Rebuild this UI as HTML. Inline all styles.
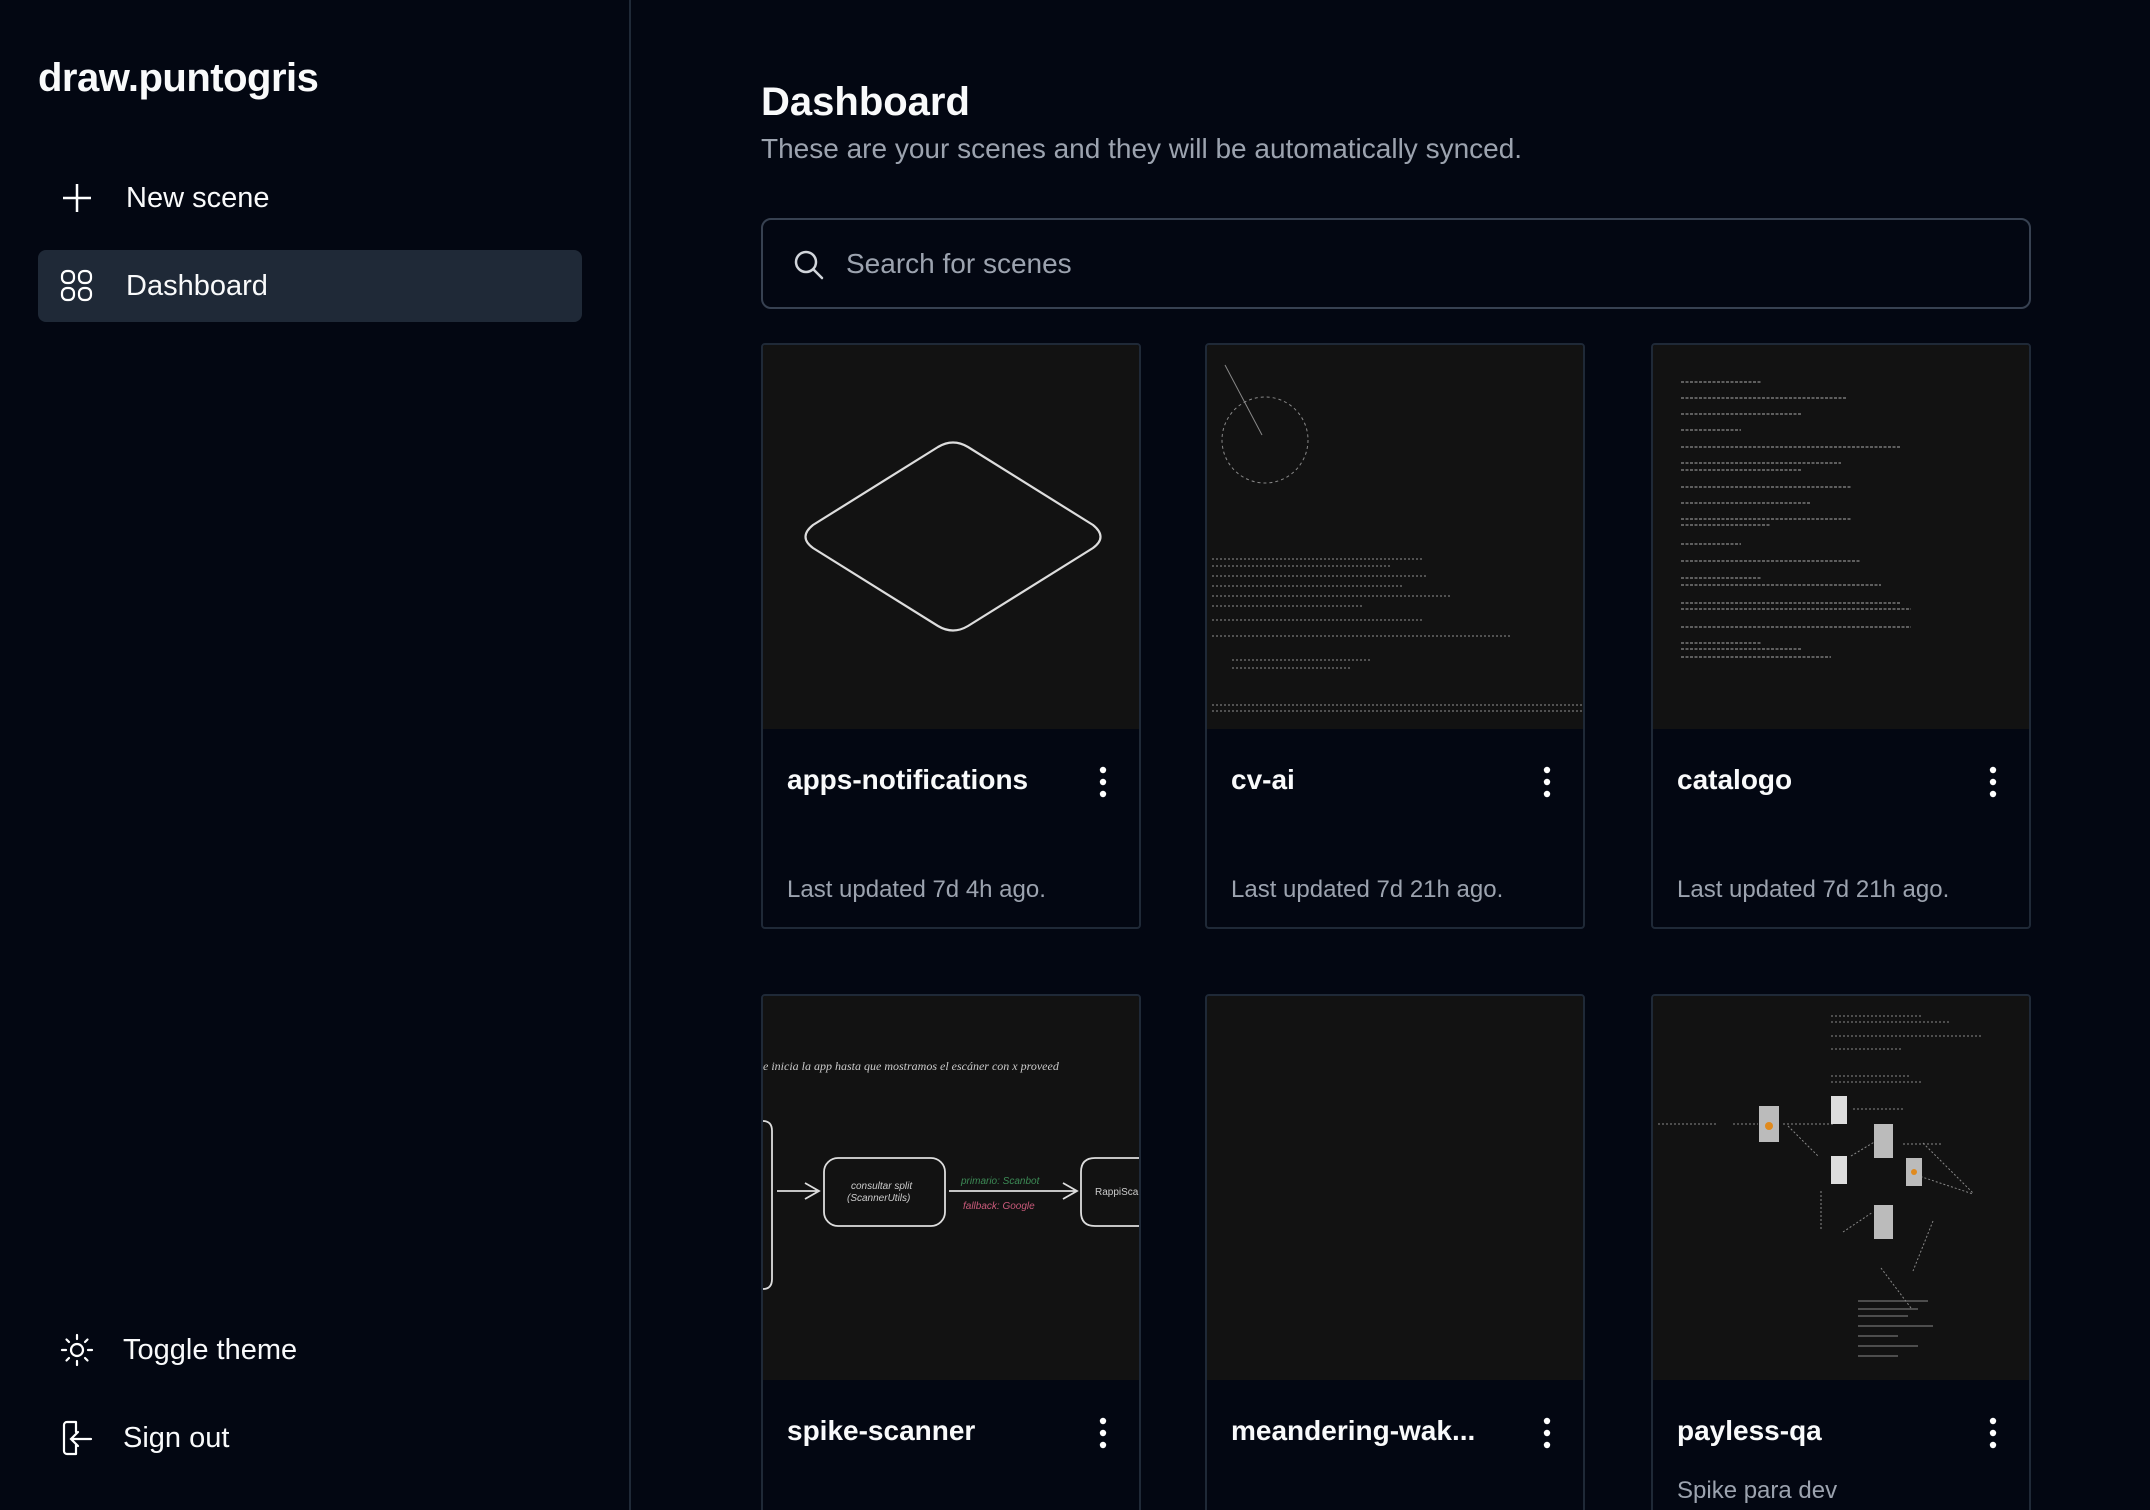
<!DOCTYPE html>
<html style="height:1510px;overflow:hidden"><head><meta charset="utf-8"><style>
*{box-sizing:border-box;margin:0;padding:0}
body{width:2150px;height:1510px;overflow:hidden;background:#030712;font-family:"Liberation Sans",sans-serif;color:#f9fafb;position:relative}
.side{position:absolute;left:0;top:0;width:631px;height:1510px;border-right:2px solid #1f2937}
.logo{position:absolute;left:38px;top:56px;font-size:40px;font-weight:bold;letter-spacing:-0.5px}
.nav{position:absolute;left:38px;width:544px;height:72px;border-radius:8px;display:flex;align-items:center;font-size:29px}
.nav svg{position:absolute;left:22px}
.nav span{position:absolute;left:88px}
.h1{position:absolute;left:761px;top:80px;font-size:40px;font-weight:bold}
.sub{position:absolute;left:761px;top:133px;font-size:28px;color:#9ca3af}
.search{position:absolute;left:761px;top:218px;width:1270px;height:91px;border:2px solid #374151;border-radius:10px}
.search span{position:absolute;left:83px;top:28px;font-size:28px;color:#9ca3af}
.card{position:absolute;width:380px;height:586px;border:2px solid #1f2937;border-radius:4px;overflow:hidden}
.thumb{position:absolute;left:0;top:0;width:100%;height:384px;background:#121212}
.t{position:absolute;left:24px;top:419px;font-size:28px;font-weight:bold}
.d{position:absolute;left:24px;top:531px;font-size:24px;color:#9ca3af}
.k{position:absolute;left:335px;top:420px}
</style></head><body>
<div class="side">
<div class="logo">draw.puntogris</div>
<div class="nav" style="top:162px"><svg width="34" height="34" viewBox="0 0 34 34"><path d="M17 3v28M3 17h28" stroke="#fff" stroke-width="2.5"/></svg><span>New scene</span></div>
<div class="nav" style="top:250px;background:#1f2937"><svg width="34" height="34" viewBox="0 0 34 34" fill="none" stroke="#fff" stroke-width="2.2"><rect x="2" y="2" width="12" height="12" rx="5"/><rect x="19" y="2" width="12" height="12" rx="5"/><rect x="2" y="19" width="12" height="12" rx="5"/><rect x="19" y="19" width="12" height="12" rx="5"/></svg><span>Dashboard</span></div>
<div class="nav" style="top:1314px"><svg width="34" height="34" viewBox="0 0 34 34" fill="none" stroke="#fff" stroke-width="2.2" stroke-linecap="round"><circle cx="17" cy="17" r="6"/><path d="M17 2v4M17 28v4M2 17h4M28 17h4M6.5 6.5l2.5 2.5M25 25l2.5 2.5M6.5 27.5l2.5-2.5M25 9l2.5-2.5"/></svg><span style="left:85px">Toggle theme</span></div>
<div class="nav" style="top:1402px"><svg width="34" height="38" viewBox="0 0 34 38" fill="none" stroke="#fff" stroke-width="2.2" stroke-linecap="round"><path d="M16 3H7a3 3 0 0 0-3 3v26a3 3 0 0 0 3 3h9M16 3v10M16 35V25M31 20H12M18 13l-7 7 7 7"/></svg><span style="left:85px">Sign out</span></div>
</div>
<div class="h1">Dashboard</div>
<div class="sub">These are your scenes and they will be automatically synced.</div>
<div class="search"><svg style="position:absolute;left:30px;top:29px" width="32" height="32" viewBox="0 0 32 32" fill="none" stroke="#d1d5db" stroke-width="2.5" stroke-linecap="round"><circle cx="13" cy="13" r="10"/><path d="M21 21l8 8"/></svg><span>Search for scenes</span></div>

<div class="card" style="left:761px;top:343px"><div class="thumb"><svg width="380" height="384"><path d="M175 102 Q190 93 205 102 L330 180 Q345 192 330 203 L205 281 Q190 290 175 281 L50 203 Q35 192 50 180 Z" fill="none" stroke="#ddd" stroke-width="2.2"/></svg></div><div class="t">apps-notifications</div><div class="k"><svg width="10" height="34"><circle cx="5" cy="5" r="3.2" fill="#fff"/><circle cx="5" cy="17" r="3.2" fill="#fff"/><circle cx="5" cy="29" r="3.2" fill="#fff"/></svg></div><div class="d">Last updated 7d 4h ago.</div></div>

<div class="card" style="left:1205px;top:343px"><div class="thumb"><svg width="380" height="384" stroke="#888" fill="none"><circle cx="58" cy="95" r="43" stroke-dasharray="3 3"/><path d="M18 20 L55 90"/><g stroke="#666" stroke-width="1.5" stroke-dasharray="2 2"><path d="M5 214h210M5 221h180M5 231h215M5 241h190M5 251h240M5 261h150M5 275h210M5 291h300M25 315h140M25 323h120M5 360h370M5 366h370"/></g></svg></div><div class="t">cv-ai</div><div class="k"><svg width="10" height="34"><circle cx="5" cy="5" r="3.2" fill="#fff"/><circle cx="5" cy="17" r="3.2" fill="#fff"/><circle cx="5" cy="29" r="3.2" fill="#fff"/></svg></div><div class="d">Last updated 7d 21h ago.</div></div>

<div class="card" style="left:1651px;top:343px"><div class="thumb"><svg width="380" height="384" stroke="#777" stroke-width="1.5" stroke-dasharray="3 1.5"><path d="M28 37h80M28 53h165M28 69h120M28 85h60M28 102h220M28 118h160M28 125h120M28 142h170M28 158h130M28 174h170M28 180h90M28 199h60M28 216h180M28 233h80M28 240h200M28 258h220M28 264h230M28 282h230M28 298h80M28 304h120M28 312h150"/></svg></div><div class="t">catalogo</div><div class="k"><svg width="10" height="34"><circle cx="5" cy="5" r="3.2" fill="#fff"/><circle cx="5" cy="17" r="3.2" fill="#fff"/><circle cx="5" cy="29" r="3.2" fill="#fff"/></svg></div><div class="d">Last updated 7d 21h ago.</div></div>

<div class="card" style="left:761px;top:994px"><div class="thumb"><svg width="380" height="384" fill="none" stroke="#ddd" stroke-width="1.8"><text x="0" y="74" fill="#ccc" stroke="none" font-family="Liberation Serif,serif" font-style="italic" font-size="12">e inicia la app hasta que mostramos el escáner con x proveed</text><path d="M0 125 Q9 125 9 135 V283 Q9 293 0 293"/><path d="M14 195h40M42 187l14 8-14 8"/><rect x="61" y="162" width="121" height="68" rx="14"/><text x="88" y="193" fill="#ccc" stroke="none" font-size="10" font-style="italic">consultar split</text><text x="84" y="205" fill="#ccc" stroke="none" font-size="10" font-style="italic">(ScannerUtils)</text><path d="M186 195h128M300 187l14 8-14 8"/><text x="198" y="188" fill="#3c8a55" stroke="none" font-size="10" font-style="italic">primario: Scanbot</text><text x="200" y="213" fill="#c95a7a" stroke="none" font-size="10" font-style="italic">fallback: Google</text><path d="M380 162h-48q-14 0-14 14v40q0 14 14 14h48"/><text x="332" y="199" fill="#ccc" stroke="none" font-size="10">RappiScan</text></svg></div><div class="t">spike-scanner</div><div class="k"><svg width="10" height="34"><circle cx="5" cy="5" r="3.2" fill="#fff"/><circle cx="5" cy="17" r="3.2" fill="#fff"/><circle cx="5" cy="29" r="3.2" fill="#fff"/></svg></div></div>

<div class="card" style="left:1205px;top:994px"><div class="thumb"></div><div class="t">meandering-wak...</div><div class="k"><svg width="10" height="34"><circle cx="5" cy="5" r="3.2" fill="#fff"/><circle cx="5" cy="17" r="3.2" fill="#fff"/><circle cx="5" cy="29" r="3.2" fill="#fff"/></svg></div></div>

<div class="card" style="left:1651px;top:994px"><div class="thumb"><svg width="380" height="384" stroke="#888" stroke-width="1" fill="none"><path d="M178 20h90M178 26h120M178 40h150M178 53h70M178 80h80M178 86h90M130 128h50M200 113h50M5 128h60M80 128h25M135 130l30 30M198 160l25-15M168 195v40M250 148h40M260 178l60 20M190 236l30-20M228 272l30 40M280 225l-20 50M270 147l50 50" stroke-dasharray="2 2"/><path d="M205 305h70M205 313h60M205 320h50M205 330h75M205 340h40M205 350h60M205 360h40"/></svg><svg style="position:absolute;left:0;top:0" width="380" height="384"><rect x="106" y="110" width="20" height="36" fill="#bbb"/><circle cx="116" cy="130" r="4" fill="#e08a1e"/><rect x="178" y="100" width="16" height="28" fill="#ddd"/><rect x="221" y="128" width="19" height="34" fill="#bbb"/><rect x="178" y="160" width="16" height="28" fill="#ddd"/><rect x="253" y="162" width="16" height="28" fill="#bbb"/><circle cx="261" cy="176" r="3" fill="#e08a1e"/><rect x="221" y="209" width="19" height="34" fill="#bbb"/></svg></div><div class="t">payless-qa</div><div class="k"><svg width="10" height="34"><circle cx="5" cy="5" r="3.2" fill="#fff"/><circle cx="5" cy="17" r="3.2" fill="#fff"/><circle cx="5" cy="29" r="3.2" fill="#fff"/></svg></div><div class="d" style="top:481px">Spike para dev</div></div>
</body></html>
